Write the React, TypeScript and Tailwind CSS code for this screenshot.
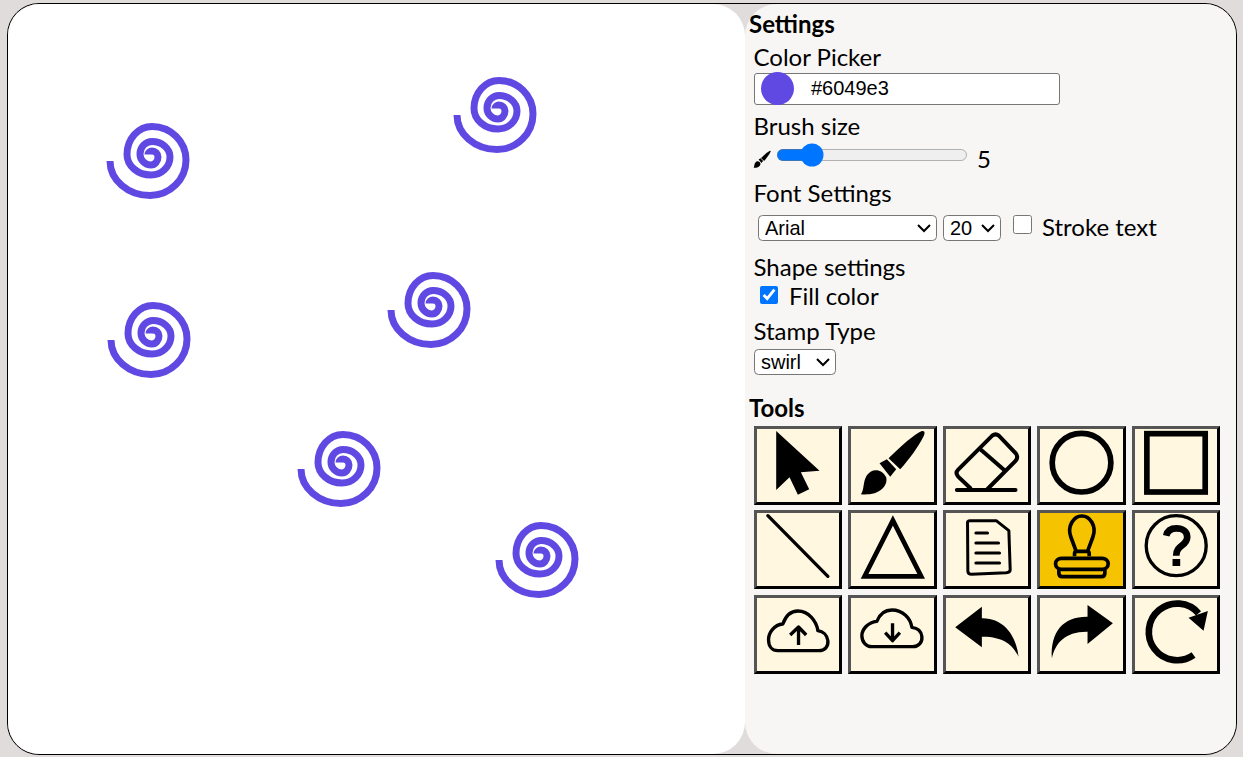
import React from 'react';

const swirlSpots = [
  'left-[92px] top-[111px]',
  'left-[439px] top-[65px]',
  'left-[93px] top-[290px]',
  'left-[373px] top-[260px]',
  'left-[283px] top-[419px]',
  'left-[481px] top-[510px]',
];

function Swirl({ spot }: { spot: string }) {
  return (
    <svg className={`absolute ${spot} w-[100px] h-[90px] blur-[0.4px]`} viewBox="100 115 100 90" fill="none" stroke="#6049e3" strokeWidth="7">
      <path d="M110 161 A40 34.5 0 0 0 150 195.5 A36 35.5 0 0 0 186 160 A34 33.5 0 0 0 152 126.5 A25 28 0 0 0 127 154.5 A24 20.5 0 0 0 151 175 A19 18 0 0 0 170 157 A18 15.5 0 0 0 152 141.5 A12 12.5 0 0 0 140 154 A11 11 0 0 0 151 165 A7 8 0 0 0 158 157 A6 6 0 0 0 152 151 A4 3.5 0 0 0 148 154.5" />
    </svg>
  );
}

// brush shape is used twice, in the tool button and next to the size slider
const brushPaths = (
  <>
    <path d="M112 88 C150 50 190 15 212 6 C222 4 222 14 216 24 C200 55 175 90 147 121 Z" />
    <path d="M85 103 L107 91 L135 121 L117 143 Z" />
    <path d="M29 196 C42 180 32 145 58 128 C75 118 95 125 105 145 C110 165 95 185 70 193 C55 197 40 197 29 196 Z" />
  </>
);

const icons: React.ReactNode[] = [
  <path key="c" d="M57 6 L187 125 L131 130 L156 181 L122 197 L97 145 L57 183 Z" fill="#000" />,
  <g key="b" fill="#000">{brushPaths}</g>,
  <g key="e" fill="none" stroke="#000" strokeWidth="12" strokeLinecap="round">
    <path d="M72 177 L36 143 Q26 132 36 122 L138 20 Q148 12 158 20 L208 72 Q218 84 208 96 L124 180" />
    <path d="M105 63 L174 123" />
    <path d="M32 183 L208 183" />
  </g>,
  <circle key="o" cx="124" cy="101" r="88" fill="none" stroke="#000" strokeWidth="17" />,
  <rect key="s" x="35" y="14" width="175" height="175" fill="none" stroke="#000" strokeWidth="17" />,
  <path key="l" d="M32 8 L212 190" stroke="#000" strokeWidth="10" strokeLinecap="round" />,
  <path key="t" d="M125 22 L210 190 L40 190 Z" fill="none" stroke="#000" strokeWidth="14" />,
  <g key="d" fill="none" stroke="#000" strokeWidth="9" strokeLinecap="round" strokeLinejoin="round">
    <path d="M64 32 Q62 23 72 23 L150 23 L188 53 L192 170 Q192 178 180 179 L76 184 Q66 184 65 175 Z" />
    <path d="M89 60 H124 M89 90 H157 M89 120 H160 M89 150 H160" />
  </g>,
  <g key="st" fill="none" stroke="#000" strokeWidth="11" strokeLinejoin="round">
    <path d="M108 115 L92 72 C80 40 100 9 125 9 C150 9 170 40 158 72 L142 115" />
    <path d="M103 130 V122 Q103 115 110 115 H140 Q147 115 147 122 V130" />
    <rect x="46" y="136" width="158" height="33" rx="18" />
    <path d="M56 169 V180 Q56 191 66 191 H184 Q194 191 194 180 V169" />
  </g>,
  <g key="h">
    <circle cx="123" cy="98" r="90" fill="none" stroke="#000" strokeWidth="10" />
    <path d="M93 68 C97 50 112 46 124 46 C142 46 156 56 156 72 C156 100 123 95 123 128" fill="none" stroke="#000" strokeWidth="20" />
    <rect x="112" y="138" width="23" height="21" fill="#000" />
  </g>,
  <g key="u" fill="none" stroke="#000" strokeWidth="10" strokeLinejoin="round">
    <path d="M62 158 H185 C203 158 214 145 212 128 C210 112 198 100 182 98 C178 70 155 39 122 39 C100 39 85 55 77 78 C50 80 34 105 34 125 C34 145 45 158 62 158 Z" />
    <path d="M124 141 V90 M99 111 L124 87 L147 111" />
  </g>,
  <g key="dl" fill="none" stroke="#000" strokeWidth="10" strokeLinejoin="round">
    <path d="M62 146 H185 C203 146 214 132 212 115 C210 100 198 90 182 88 C178 60 155 36 122 36 C100 36 85 50 77 70 C50 72 32 95 32 113 C32 132 45 146 62 146 Z" />
    <path d="M124 76 V124 M102 104 L124 128 L146 104" />
  </g>,
  <path key="un" d="M27 88 L107 26 L107 61 C170 60 210 110 217 176 C200 140 170 115 107 116 L107 148 Z" fill="#000" />,
  <path key="re" d="M218 76 L142 21 L142 56 C70 55 30 100 35 181 C45 135 75 100 142 101 L142 138 Z" fill="#000" />,
  <g key="rl">
    <path d="M175 171 A85 85 0 1 1 190 46" fill="none" stroke="#000" strokeWidth="20" />
    <path d="M218 39 L205 98 L160 59 Z" fill="#000" />
  </g>,
];

const arial = 'font-["Liberation_Sans",Arial,sans-serif] text-[20px] leading-none';
// selects are native ones scaled up by 1.5, same as the slider
const selectBox = 'font-["Liberation_Sans",Arial,sans-serif] text-[13.333px] [zoom:1.5] h-[17.33px] bg-white text-black border border-[#767676] rounded-[3px]';

export default function App() {
  return (
    <div className="h-[757px] w-[1243px] overflow-hidden bg-[#e0dcdb] pt-[3px] pl-[7px]">
      <div className="flex h-[752px] w-[1230px] rounded-[32px] border border-black font-['Lato',sans-serif] text-black">
        <div className="relative w-[737px] h-full rounded-[32px] bg-white">
          {swirlSpots.map((spot) => (
            <Swirl key={spot} spot={spot} />
          ))}
        </div>

        <div className="flex-1 h-full rounded-[32px] bg-[#f8f6f4] pl-[4px] pt-[5px] text-[24px] leading-[29px]">
          <h2 className="font-bold">Settings</h2>

          <div className="pl-[5px] pt-[4px]">
            <div className="-ml-[0.5px]">Color Picker</div>
            <div className="relative mt-[2px] flex h-[32px] w-[306px] items-center rounded-[3px] border border-[#767676] bg-white pb-[2px] pl-[56px]">
              <span className="absolute left-[6px] top-[-2px] h-[33px] w-[33px] rounded-full bg-[#6049e3]" />
              <span className={arial}>#6049e3</span>
            </div>

            <div className="-ml-[0.5px] mt-[6px]">Brush size</div>
            <div className="-ml-[0.5px] flex h-[30px] items-center">
              <svg className="-ml-[3px] mt-[10px] h-[20px] w-[22px]" viewBox="0 0 246 219" fill="#000">{brushPaths}</svg>
              <input type="range" min={0} max={35} defaultValue={5} className="ml-[2.33px] w-[128px] [zoom:1.5]" />
              <span className="ml-[9px] mt-[6px]">5</span>
            </div>

            <div className="-ml-[0.5px] mt-[8px]">Font Settings</div>
            <div className="mt-[8px] flex h-[26px] items-center pl-[4px]">
              <select className={`${selectBox} w-[119.33px]`} defaultValue="Arial">
                <option>Arial</option>
              </select>
              <select className={`${selectBox} ml-[4px] w-[38.67px]`} defaultValue="20">
                <option>20</option>
              </select>
              <input type="checkbox" className="mb-[8px] ml-[12px] h-[19px] w-[19px]" />
              <span className="mb-[4px] ml-[10px]">Stroke text</span>
            </div>

            <div className="-ml-[0.5px] mt-[11px]">Shape settings</div>
            <div className="flex items-center pl-[6px]">
              <input type="checkbox" defaultChecked className="mb-[2px] h-[18px] w-[18px]" />
              <span className="ml-[11px]">Fill color</span>
            </div>

            <div className="-ml-[0.5px] mt-[6px]">Stamp Type</div>
            <select className={`${selectBox} mt-[2.67px] block w-[54.67px]`} defaultValue="swirl">
              <option>swirl</option>
            </select>
          </div>

          <h2 className="mt-[18px] font-bold">Tools</h2>
          <div className="ml-[5px] mt-[4px] grid w-[466px] grid-cols-5 gap-x-[6px] gap-y-[5.5px]">
            {icons.map((icon, i) => (
              <button
                key={i}
                className={`h-[79px] border-[3px] border-t-[#555] border-l-[#555] border-r-black border-b-black ${i === 8 ? 'bg-[#f5c300]' : 'bg-[#fff7df]'}`}
              >
                <svg className="block h-full w-full" viewBox="0 0 246 219">
                  {icon}
                </svg>
              </button>
            ))}
          </div>
        </div>
      </div>
    </div>
  );
}
